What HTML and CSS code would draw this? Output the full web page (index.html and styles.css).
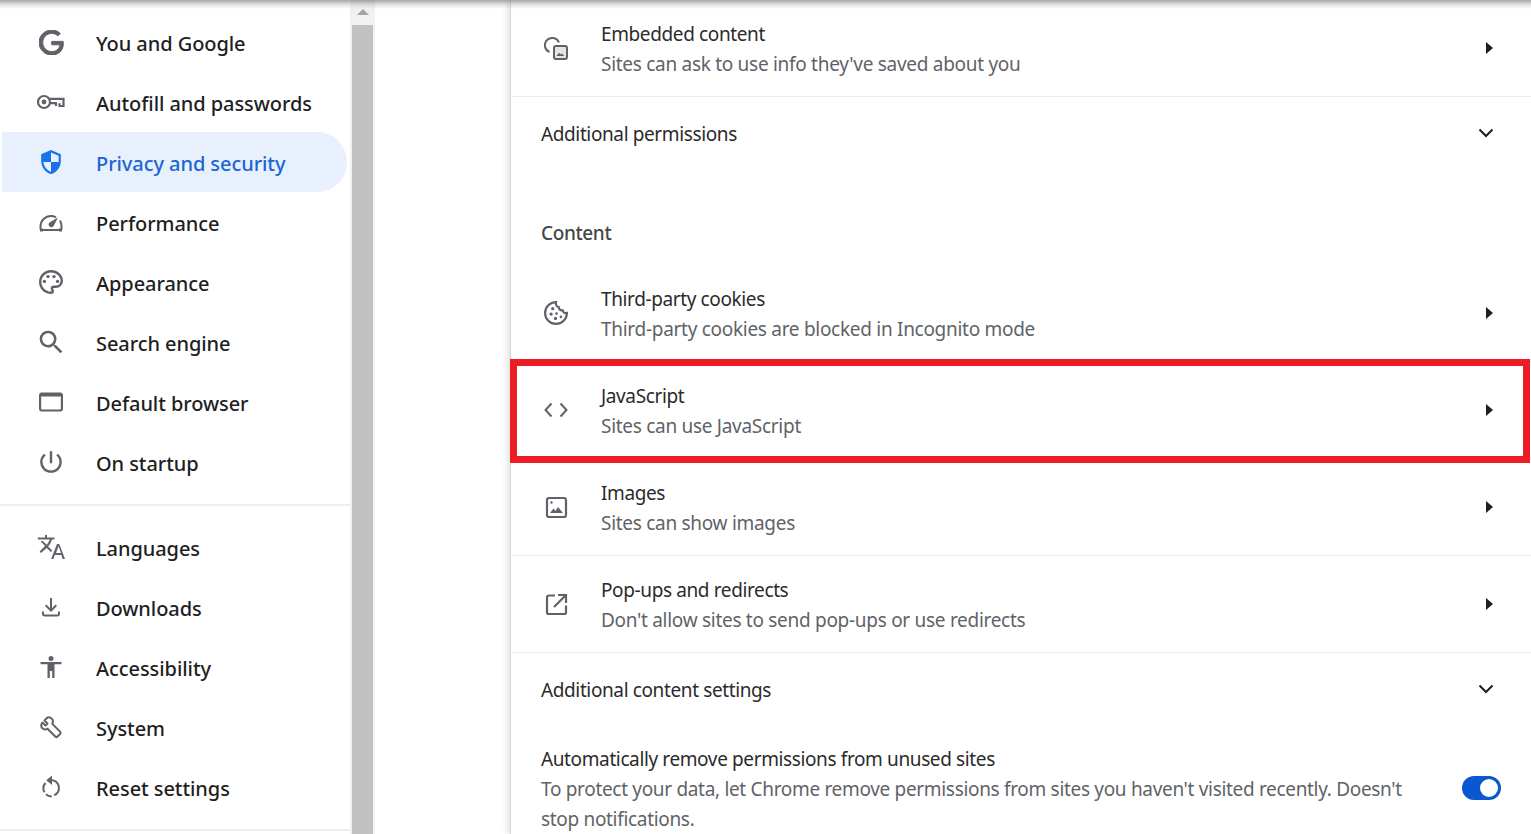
FILE: index.html
```html
<!DOCTYPE html>
<html lang="en">
<head>
<meta charset="utf-8">
<title>Settings - Privacy and security</title>
<link rel="stylesheet" href="styles.css">
</head>
<body>
<div class="top-shadow"></div>
<div class="app">
  <nav class="sidebar">
    <ul class="nav-group">
      <li class="nav-item"><span class="nav-icon"><svg class="ic ic-g" viewBox="2 2 20 20"><path fill="currentColor" stroke="currentColor" stroke-width=".8" d="M21.35 11.1h-9.17v2.73h6.51c-.33 3.81-3.5 5.44-6.5 5.44C8.36 19.27 5 16.25 5 12c0-4.1 3.2-7.27 7.2-7.27 3.09 0 4.9 1.97 4.9 1.97L19 4.72S16.56 2 12.1 2C6.42 2 2 6.8 2 12c0 5.05 4.13 10 10.22 10 5.35 0 9.25-3.67 9.25-9.09 0-1.15-.12-1.81-.12-1.81z"/></svg></span>You and Google</li>
      <li class="nav-item"><span class="nav-icon"><svg class="ic ic-wide" viewBox="0 0 28 24"><g fill="none" stroke="currentColor" stroke-width="2.200"><circle cx="7" cy="12" r="6"/><path d="M12.500 8.800H26.500V16H22.500V13.200M19 16V13.200H12.500"/></g><circle cx="7" cy="12" r="2.400" fill="currentColor"/></svg></span>Autofill and passwords</li>
      <li class="nav-item is-active"><span class="nav-icon"><svg class="ic" viewBox="1 1 22 22"><path fill="currentColor" d="M12 1 3 5v6c0 5.550 3.840 10.740 9 12 5.160-1.260 9-6.450 9-12V5l-9-4z"/><path fill="#e8f0fe" d="M12 3.200 19 6.300V12h-7zM5 12h7v8.900C8.300 19.800 5.500 16.200 5 12z"/></svg></span>Privacy and security</li>
      <li class="nav-item"><span class="nav-icon"><svg class="ic" viewBox="0 0 24 24"><g fill="none" stroke="currentColor" stroke-width="2"><path d="M1.500 19.500v-3C1.500 10.700 6.200 6 12 6c2 0 3.500.5 5 1.300M21 10.500c1 1.800 1.500 3.800 1.500 6v3"/><path stroke-width="3" d="M1 20h3M20 20h3"/></g><path fill="currentColor" d="M1 19h22v2H1zM10.500 12.500 19 7.500l-4.500 8.800a2.400 2.400 0 1 1-4-3.800z"/></svg></span>Performance</li>
      <li class="nav-item"><span class="nav-icon"><svg class="ic" viewBox="2 2 20 20"><path fill="currentColor" d="M12 22C6.490 22 2 17.510 2 12S6.490 2 12 2s10 4.040 10 9c0 3.310-2.690 6-6 6h-1.770c-.28 0-.5.220-.5.500 0 .12.050.23.130.33.410.47.640 1.060.64 1.670A2.500 2.500 0 0 1 12 22zm0-18c-4.410 0-8 3.590-8 8s3.590 8 8 8c.28 0 .5-.22.500-.5a.54.54 0 0 0-.14-.35c-.41-.46-.63-1.050-.63-1.650a2.500 2.500 0 0 1 2.500-2.500H16c2.210 0 4-1.790 4-4 0-3.860-3.590-7-8-7z"/><circle cx="6.500" cy="11.500" r="1.400" fill="currentColor"/><circle cx="9.500" cy="7.500" r="1.400" fill="currentColor"/><circle cx="14.500" cy="7.500" r="1.400" fill="currentColor"/><circle cx="17.500" cy="11.500" r="1.400" fill="currentColor"/></svg></span>Appearance</li>
      <li class="nav-item"><span class="nav-icon"><svg class="ic" viewBox="2.500 2.500 18.500 18.500"><path fill="currentColor" d="M15.500 14h-.79l-.28-.27A6.471 6.471 0 0 0 16 9.500 6.500 6.500 0 1 0 9.500 16c1.610 0 3.090-.59 4.230-1.570l.27.28v.79l5 4.990L20.490 19l-4.990-5zm-6 0C7.010 14 5 11.990 5 9.500S7.010 5 9.500 5 14 7.010 14 9.500 11.990 14 9.500 14z"/></svg></span>Search engine</li>
      <li class="nav-item"><span class="nav-icon"><svg class="ic" viewBox="2 2 20 20"><path fill="currentColor" d="M2 6.500C2 5.100 2.900 4 4 4h16c1.100 0 2 1.100 2 2.500v11c0 1.400-.9 2.500-2 2.500H4c-1.100 0-2-1.100-2-2.500v-11zM3.800 7.500v10c0 .3.200.7.700.7h15c.5 0 .7-.4.700-.7v-10H3.800z"/></svg></span>Default browser</li>
      <li class="nav-item"><span class="nav-icon"><svg class="ic" viewBox="2 2 20 20"><path fill="currentColor" d="M13 3h-2v10h2V3zm4.830 2.170-1.420 1.420A6.920 6.920 0 0 1 19 12c0 3.870-3.130 7-7 7a6.995 6.995 0 0 1-4.420-12.420L6.170 5.170A8.932 8.932 0 0 0 3 12a9 9 0 0 0 18 0c0-2.740-1.230-5.180-3.170-6.830z"/></svg></span>On startup</li>
    </ul>
    <ul class="nav-group">
      <li class="nav-item"><span class="nav-icon"><svg class="ic ic-wide" viewBox="0 0 28 24"><path fill="currentColor" d="M8 0h2v2.500h7.500v2H15c-1 3-2.300 5.200-3.800 7l3.800 3.700-.8 2-4.500-4.300L4 18l-1.400-1.500L8 11 3.500 6h2.300l3.900 3.700C11 8.200 12.100 6.500 12.800 4.500H.8v-2H8V0z"/><path fill="currentColor" d="M20 9h2.200l5.800 15h-2.300l-1.400-4h-6.500l-1.400 4h-2.300L20 9zm-1 9h5l-2.500-6.800L19 18z"/></svg></span>Languages</li>
      <li class="nav-item"><span class="nav-icon"><svg class="ic" viewBox="0 0 24 24"><path fill="currentColor" d="M11 3h2v10.200l3.600-3.600L18 11l-6 6-6-6 1.400-1.400 3.600 3.600V3zM3 16.500h2V19c0 .4.300.5.500.5h13c.2 0 .5-.1.500-.5v-2.500h2V19c0 1.400-1.100 2.500-2.500 2.500h-13C4.100 21.500 3 20.400 3 19v-2.500z"/></svg></span>Downloads</li>
      <li class="nav-item"><span class="nav-icon"><svg class="ic" viewBox="0 0 24 24"><circle cx="12" cy="3.500" r="2.500" fill="currentColor"/><path fill="currentColor" d="M1.500 7h21v2.300H15.500V23h-2.300v-7h-2.400v7H8.500V9.300H1.500z"/></svg></span>Accessibility</li>
      <li class="nav-item"><span class="nav-icon"><svg class="ic" viewBox="0 0 24 24"><path fill="none" stroke="currentColor" stroke-width="2" stroke-linejoin="round" d="M8.500 2.500 5.500 5.500l3 3-2 2-3-3-1.200 2c-.4 2 .5 3.600 2 4.400 1.400.7 2.900.6 4.200-.2l8 8c.6.5 1.300.5 1.800 0l3-3c.5-.6.500-1.300 0-1.800l-8-8c.8-1.400.9-3 .2-4.400C12.500 3 10.500 2 8.500 2.500z"/></svg></span>System</li>
      <li class="nav-item"><span class="nav-icon"><svg class="ic" viewBox="0 0 24 24"><g fill="none" stroke="currentColor" stroke-width="2"><path d="M13 5.300A7.800 7.800 0 0 1 15.200 20.200"/><path d="M12.700 21.500A7.800 7.800 0 0 1 7 19.300"/><path d="M5.500 17.300A8 8 0 0 1 6.500 8"/></g><path fill="currentColor" d="M13 .5V10L7.200 5.300z"/></svg></span>Reset settings</li>
    </ul>
  </nav>
  <div class="scrollbar">
    <span class="scroll-arrow"></span>
    <span class="scroll-thumb"></span>
  </div>
  <main class="content">
    <div class="card">
      <div class="row">
        <span class="row-icon"><svg class="ic" viewBox="0 0 24 24"><path fill="none" stroke="currentColor" stroke-width="2" d="M5.500 16A7.300 7.300 0 1 1 15 6.500"/><rect x="10" y="10" width="13" height="13" rx="2" fill="#e4e5e6" stroke="currentColor" stroke-width="2"/><path fill="currentColor" d="M12.500 20l2.500-3.200 1.500 1.700 1-1.200L20.500 20z"/></svg></span>
        <div class="row-text"><div class="row-title">Embedded content</div><div class="row-sub">Sites can ask to use info they've saved about you</div></div>
        <span class="arrow"></span>
      </div>
      <div class="expander expander-perm"><span class="expander-label">Additional permissions</span><svg class="chev" viewBox="0 0 16 10"><path fill="none" stroke="currentColor" stroke-width="2" d="M1.500 1.500 8 8l6.500-6.500"/></svg></div>
      <h2 class="section-label">Content</h2>
      <div class="row">
        <span class="row-icon"><svg class="ic" viewBox="1 1 22 22"><path fill="none" stroke="currentColor" stroke-width="2" d="M12 2a10 10 0 1 0 10 10c-2 .5-3.500-.5-4-2.500-2 .3-3.500-1-3.500-3C12.500 6.500 11.500 4 12 2z"/><circle cx="9" cy="8" r="1.500" fill="currentColor"/><circle cx="7.500" cy="13" r="1.500" fill="currentColor"/><circle cx="12.500" cy="12.500" r="1.200" fill="currentColor"/><circle cx="11.500" cy="17" r="1.500" fill="currentColor"/><circle cx="16.500" cy="15.500" r="1.200" fill="currentColor"/></svg></span>
        <div class="row-text"><div class="row-title">Third-party cookies</div><div class="row-sub">Third-party cookies are blocked in Incognito mode</div></div>
        <span class="arrow"></span>
      </div>
      <div class="row">
        <span class="row-icon"><svg class="ic" viewBox="0 0 24 24"><path fill="none" stroke="currentColor" stroke-width="2" d="M7.500 5.500 1.500 12l6 6.500M16.500 5.500l6 6.500-6 6.500"/></svg></span>
        <div class="row-text"><div class="row-title">JavaScript</div><div class="row-sub">Sites can use JavaScript</div></div>
        <span class="arrow"></span>
      </div>
      <div class="row">
        <span class="row-icon"><svg class="ic" viewBox="0 0 24 24"><rect x="3" y="3" width="19" height="19" rx="2" fill="none" stroke="currentColor" stroke-width="2.200"/><circle cx="7.500" cy="7.500" r="1.200" fill="currentColor"/><path fill="currentColor" d="M6 18l3.500-4.500 2 2.500 2.500-4 5 6z"/></svg></span>
        <div class="row-text"><div class="row-title">Images</div><div class="row-sub">Sites can show images</div></div>
        <span class="arrow"></span>
      </div>
      <div class="row">
        <span class="row-icon"><svg class="ic" viewBox="0 0 24 24"><path fill="none" stroke="currentColor" stroke-width="2.200" d="M11 3.500H5c-1.100 0-2 .9-2 2v15c0 1 .9 1.500 2 1.500h15c1.100 0 2-.5 2-1.500v-7M14 3h8v8M22 3 10 15"/></svg></span>
        <div class="row-text"><div class="row-title">Pop-ups and redirects</div><div class="row-sub">Don't allow sites to send pop-ups or use redirects</div></div>
        <span class="arrow"></span>
      </div>
      <div class="expander"><span class="expander-label">Additional content settings</span><svg class="chev" viewBox="0 0 16 10"><path fill="none" stroke="currentColor" stroke-width="2" d="M1.500 1.500 8 8l6.500-6.500"/></svg></div>
      <div class="toggle-row">
        <div class="toggle-text"><div class="row-title">Automatically remove permissions from unused sites</div><div class="row-sub row-sub-long">To protect your data, let Chrome remove permissions from sites you haven't visited recently. Doesn't stop notifications.</div></div>
        <span class="toggle"><span class="toggle-knob"></span></span>
      </div>
    </div>
    <div class="highlight"></div>
  </main>
</div>
</body>
</html>
```

FILE: styles.css
```css
* { box-sizing: border-box; }
html, body { margin: 0; height: 834px; overflow: hidden; background: #fff; }
body { font-family: "Noto Sans", "Open Sans", sans-serif; color: #1f1f1f; position: relative; }
.top-shadow { position: absolute; left: 0; right: 0; top: 0; height: 9px; z-index: 5; pointer-events: none;
  background: linear-gradient(to bottom, rgba(110,110,110,.62), rgba(150,150,150,.32) 45%, rgba(200,200,200,0)); }
.app { display: flex; height: 834px; }

.sidebar { width: 350px; flex: none; padding-top: 12px; }
.nav-group { list-style: none; margin: 0; padding: 0 0 12px; border-bottom: 2px solid #eeeeee; height: 494px; }
.nav-group + .nav-group { height: 325px; padding-top: 11px; }
.nav-item { height: 60px; display: flex; align-items: center; padding: 2px 0 0 39px; margin-right: 3px;
  font-size: 20px; font-weight: 500; letter-spacing: -.07px; border-radius: 0 30px 30px 0; }
.nav-icon { width: 24px; height: 24px; margin: -2px 33px 0 0; display: flex; align-items: center; justify-content: center; color: #5f6368; flex: none; }
.is-active { color: #1a66d4; background: #e8f0fe; margin-left: 2px; padding-left: 37px; }
.is-active .nav-icon { color: #1a73e8; }
.ic { width: 24px; height: 24px; flex: none; display: block; }
.ic-g { width: 25px; height: 25px; }
.ic-wide { width: 28px; height: 24px; }

.scrollbar { width: 25px; flex: none; background: #f1f1f1; padding: 0 2px; display: flex; flex-direction: column; align-items: center; }
.scroll-arrow { width: 0; height: 0; margin-top: 9px; border-left: 6px solid transparent; border-right: 6px solid transparent; border-bottom: 6px solid #a3a3a3; }
.scroll-thumb { width: 21px; flex: 1; margin-top: 10px; background: #c1c1c1; }

.content { flex: 1; padding-left: 135px; position: relative; }
.card { height: 834px; background: #fff; border-left: 1px solid #d6d6d6; box-shadow: -3px 0 5px rgba(60,64,67,.14); }

.row { height: 97px; border-bottom: 1px solid #ececec; display: flex; align-items: center; padding: 1px 31px 0 33px; }
.row-icon { width: 24px; height: 24px; margin: -2px 33px 0 0; color: #5f6368; flex: none; }
.row-text { flex: 1; }
.row-title { font-size: 19px; line-height: 30px; letter-spacing: -.38px; color: #2b2b2b; }
.row-sub { font-size: 19px; line-height: 30px; letter-spacing: -.29px; color: #5f6368; }
.row-sub-long { letter-spacing: -.32px; }
.arrow { width: 0; height: 0; border-top: 6.500px solid transparent; border-bottom: 6.500px solid transparent; border-left: 7px solid #1f1f1f; margin: -2px 7px 0 0; }
.expander { height: 73px; display: flex; align-items: center; justify-content: space-between; padding: 0 37px 0 30px; }
.expander-perm { height: 74px; }
.expander-label { font-size: 19px; letter-spacing: -.38px; color: #2b2b2b; }
.chev { width: 16px; height: 10px; color: #1f1f1f; margin-top: -2px; }
.section-label { margin: 47px 0 17px; padding-left: 30px; font-size: 19px; line-height: 30px; font-weight: 500; letter-spacing: -.38px; color: #444746; }
.toggle-row { display: flex; align-items: flex-start; padding: 18px 30px 0 30px; }
.toggle-text { width: 880px; flex: none; }
.toggle { width: 39px; height: 24px; margin: 32px 0 0 41px; border-radius: 12px; background: #0b57d0; display: flex; align-items: center; justify-content: flex-end; padding-right: 3px; flex: none; }
.toggle-knob { width: 18px; height: 18px; border-radius: 50%; background: #fff; }
.highlight { position: absolute; left: 135px; top: 359px; width: 1020px; height: 104px; border: 7px solid #ed1c24; pointer-events: none; }
```
